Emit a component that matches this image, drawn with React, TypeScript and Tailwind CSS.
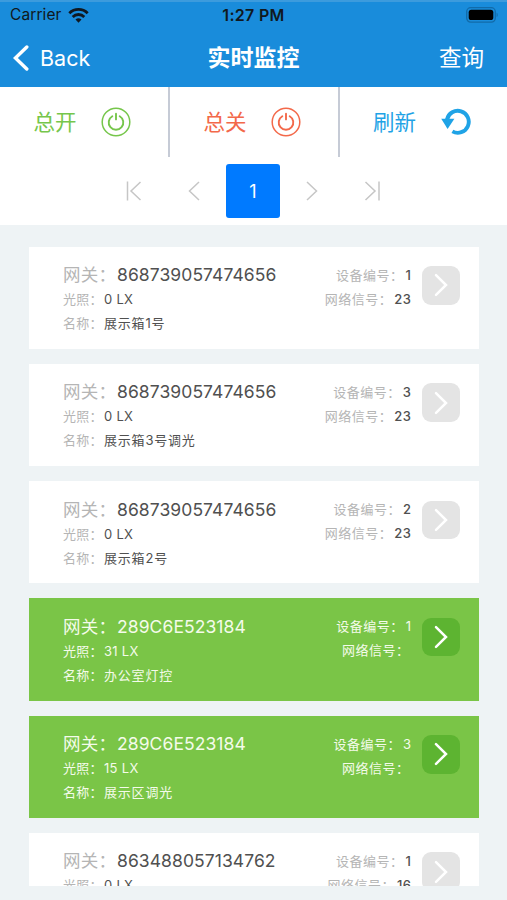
import { ReactNode } from "react"
import { cva } from "class-variance-authority"
import clsx from "clsx"

type Device = {
  gateway: string
  light: string
  name: string
  no: string
  signal: string
  on: boolean
}

const devices: Device[] = [
  { gateway: "868739057474656", light: "0 LX", name: "展示箱1号", no: "1", signal: "23", on: false },
  { gateway: "868739057474656", light: "0 LX", name: "展示箱3号调光", no: "3", signal: "23", on: false },
  { gateway: "868739057474656", light: "0 LX", name: "展示箱2号", no: "2", signal: "23", on: false },
  { gateway: "289C6E523184", light: "31 LX", name: "办公室灯控", no: "1", signal: "", on: true },
  { gateway: "289C6E523184", light: "15 LX", name: "展示区调光", no: "3", signal: "", on: true },
  { gateway: "863488057134762", light: "0 LX", name: "", no: "1", signal: "16", on: false },
]

const card = cva("flex h-[102.25px] shrink-0 pl-[34px] pr-[18.5px]", {
  variants: {
    on: {
      true: "bg-[#7ac547] text-[#f4fbea]",
      false: "bg-white text-[#505050]",
    },
  },
})

function PowerIcon() {
  return (
    <svg width="30" height="30" viewBox="0 0 30 30" fill="none" stroke="currentColor" strokeLinecap="round">
      <circle cx="15" cy="15" r="13.8" strokeWidth="1.5" />
      <path d="M11.3 9.2a7.3 7.3 0 1 0 7.4 0" strokeWidth="1.9" />
      <path d="M15 6.8v5.6" strokeWidth="1.9" />
    </svg>
  )
}

function RefreshIcon() {
  return (
    <svg width="30" height="28" viewBox="0 0 30 28">
      <path d="M6 11.5A11 11 0 1 1 11.4 23.4" fill="none" stroke="currentColor" strokeWidth="3.9" />
      <path d="M0.2 10.7h13.2L6.6 21z" fill="currentColor" />
    </svg>
  )
}

function StatusBar() {
  return (
    <div className="grid h-[30px] grid-cols-3 items-center px-[9px] text-[#101820]">
      <div className="flex items-center gap-[6px] pl-px">
        <span className="text-[15.5px] tracking-[0.1px]">Carrier</span>
        <svg width="21" height="15" viewBox="0 0 21 15" fill="none" stroke="currentColor" strokeWidth="2.8">
          <path d="M1.3 5.2a13.2 13.2 0 0 1 18.4 0" />
          <path d="M4.7 8.9a8.2 8.2 0 0 1 11.6 0" />
          <path d="M10.5 14.8l-3-3.2a4.3 4.3 0 0 1 6 0z" fill="currentColor" stroke="none" />
        </svg>
      </div>
      <span className="text-center text-[16px] font-semibold tracking-[0.3px]">1:27 PM</span>
      <svg className="justify-self-end" width="33" height="16" viewBox="0 0 33 16">
        <rect x="1.7" y="0.7" width="28.6" height="14.4" rx="4" fill="none" stroke="#126ba9" strokeWidth="1.3" />
        <rect x="3.7" y="2.7" width="24.6" height="10.4" rx="2.6" fill="#000" />
        <path d="M31.6 5.7c1.5.6 1.5 3.8 0 4.4z" fill="#126ba9" />
      </svg>
    </div>
  )
}

function Action({ label, className, children }: { label: string; className: string; children: ReactNode }) {
  return (
    <button className={clsx("flex h-[70px] items-center justify-between", className)}>
      <span className="text-[21.5px]">{label}</span>
      {children}
    </button>
  )
}

function PageArrow({ d }: { d: string }) {
  return (
    <button className="flex h-[54px] w-[60px] items-center justify-center">
      <svg width="20" height="20" viewBox="0 0 20 20" fill="none" stroke="#c6c6c6" strokeWidth="1.5">
        <path d={d} />
      </svg>
    </button>
  )
}

function DeviceCard({ device }: { device: Device }) {
  const label = device.on ? "" : "text-[#b5b5b5]"

  return (
    <div className={card({ on: device.on })}>
      <div className="flex-1 pt-[16.5px] text-[13px] leading-6">
        <div className="flex text-[17.5px]">
          <span className={clsx("w-[54px] tracking-[0.3px]", label)}>网关：</span>
          <span className="tracking-[0.08px]">{device.gateway}</span>
        </div>
        <div className="flex">
          <span className={clsx("w-[41px] tracking-[0.2px]", label)}>光照：</span>
          <span className="tracking-[0.3px]">{device.light}</span>
        </div>
        {device.name && (
          <div className="flex">
            <span className={clsx("w-[41px] tracking-[0.2px]", label)}>名称：</span>
            <span className="tracking-[0.8px]">{device.name}</span>
          </div>
        )}
      </div>
      <div className="pt-[16px] text-right text-[13px] leading-6 tracking-[0.5px]">
        <div>
          <span className={clsx("mr-[2px]", label)}>设备编号：</span>
          <span className={clsx(!device.on && "font-medium")}>{device.no}</span>
        </div>
        <div>
          <span className={clsx("mr-[2px]", label)}>网络信号：</span>
          <span className={clsx(!device.on && "font-medium")}>{device.signal}</span>
        </div>
      </div>
      <button
        className={clsx(
          "ml-[10px] mt-[19.5px] flex size-[38.5px] items-center justify-center rounded-[9px]",
          device.on ? "bg-[#5db431]" : "bg-[#e4e4e4]",
        )}
      >
        <svg width="14" height="24" viewBox="0 0 14 24" fill="none" stroke="#fff" strokeWidth="2.5" strokeLinecap="round">
          <path d="M2 2.2l10 9.8-10 9.8" />
        </svg>
      </button>
    </div>
  )
}

export default function App() {
  return (
    <div className="flex h-[900px] w-[507px] flex-col overflow-hidden bg-[#eef3f5] font-['Inter','Noto_Sans_CJK_SC',sans-serif]">
      <header className="h-[87px] shrink-0 border-t-2 border-[#3c9bdd] bg-[#198cdb]">
        <div className="-mt-[2px]">
          <StatusBar />
        </div>
        <div className="grid h-[56px] grid-cols-3 items-center px-[13px] text-[22px] text-white">
          <button className="flex items-center gap-[11px]">
            <svg width="16" height="26" viewBox="0 0 16 26" fill="none" stroke="currentColor" strokeWidth="3.4" strokeLinecap="round">
              <path d="M13.8 2L2.4 13l11.4 11" />
            </svg>
            <span className="text-[21.5px]">Back</span>
          </button>
          <h1 className="text-center text-[23px] font-bold">实时监控</h1>
          <button className="justify-self-end pr-[10px] text-[22.5px]">查询</button>
        </div>
      </header>

      <div className="h-[138px] shrink-0 bg-white">
        <div className="grid grid-cols-[168px_170px_169px]">
          <Action label="总开" className="pl-[33.5px] pr-[37.5px] text-[#76c64b]">
            <PowerIcon />
          </Action>
          <Action label="总关" className="border-l-2 border-[#c6cbd6] pl-[33.5px] pr-[37.5px] text-[#f3694a]">
            <PowerIcon />
          </Action>
          <Action label="刷新" className="border-l-2 border-[#c6cbd6] pl-[33px] pr-[36px] text-[#1fa3e6]">
            <RefreshIcon />
          </Action>
        </div>
        <div className="flex justify-center pr-px pt-[7px]">
          <PageArrow d="M3.5 0.5v19M16.5 1L7 10l9.5 9" />
          <PageArrow d="M15 1L5.5 10l9.5 9" />
          <button className="mx-[2px] h-[54px] w-[54px] rounded-[3px] bg-[#007aff] text-[18px] text-white">1</button>
          <PageArrow d="M5 1l9.5 9L5 19" />
          <PageArrow d="M3.5 1l9.5 9-9.5 9M17 0.5v19" />
        </div>
      </div>

      {/* Device list, cut off above the home indicator */}
      <div className="mb-[14px] flex min-h-0 flex-1 flex-col gap-[15px] overflow-hidden pl-[29px] pr-[28.5px] pt-[21.5px]">
        {devices.map((device, i) => (
          <DeviceCard key={i} device={device} />
        ))}
      </div>
    </div>
  )
}
